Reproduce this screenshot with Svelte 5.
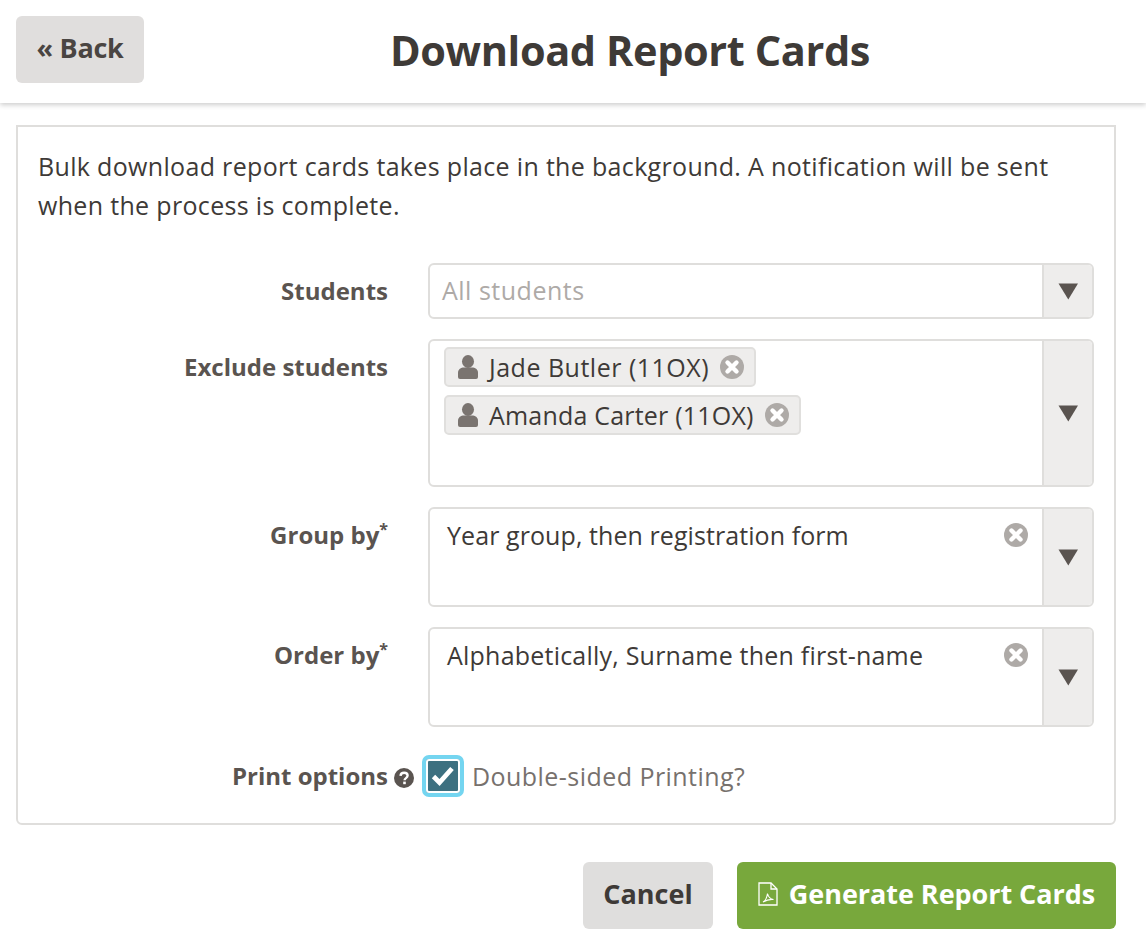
<script>
  const pdfPath = 'M1 1h12l6 6v16H1z';
</script>

{#snippet arrow()}
  <span class="arrow">
    <svg width="20" height="17" viewBox="0 0 20 17"><path d="M0.5 0.5h19.5L10.3 16.500z" fill="#5a5450" /></svg>
  </span>
{/snippet}

{#snippet clear()}
  <svg class="clear" width="24" height="24" viewBox="0 0 24 24">
    <circle cx="12" cy="12" r="12" fill="#aeaaa7" />
    <path d="M7.500 7.500l9 9M16.500 7.500l-9 9" stroke="#fff" stroke-width="4.400" stroke-linecap="round" />
  </svg>
{/snippet}

{#snippet person()}
  <svg class="person" width="20" height="24" viewBox="0 0 20 24">
    <ellipse cx="10" cy="6.500" rx="6" ry="6.500" fill="#7a7470" />
    <path d="M0 18c0-4 3-5.500 6-5.500h8c3 0 6 1.500 6 5.500v4a2 2 0 0 1-2 2H2a2 2 0 0 1-2-2z" fill="#7a7470" />
  </svg>
{/snippet}

<header class="topbar">
  <button class="btn back">« Back</button>
  <h1>Download Report Cards</h1>
</header>

<main class="content">
  <section class="panel">
    <p class="intro">Bulk download report cards takes place in the background. A notification will be sent when the process is complete.</p>

    <div class="form">
      <div class="label">Students</div>
      <div class="select students">
        <div class="value placeholder">All students</div>
        {@render arrow()}
      </div>

      <div class="label">Exclude students</div>
      <div class="select exclude">
        <div class="value chips">
          <span class="chip">{@render person()}<span class="name">Jade Butler (11OX)</span>{@render clear()}</span>
          <span class="chip long">{@render person()}<span class="name">Amanda Carter (11OX)</span>{@render clear()}</span>
        </div>
        {@render arrow()}
      </div>

      <div class="label">Group by<sup>*</sup></div>
      <div class="select tall">
        <div class="value single"><span>Year group, then registration form</span>{@render clear()}</div>
        {@render arrow()}
      </div>

      <div class="label">Order by<sup>*</sup></div>
      <div class="select tall">
        <div class="value single order"><span>Alphabetically, Surname then first-name</span>{@render clear()}</div>
        {@render arrow()}
      </div>

      <div class="label print-label">
        Print options
        <svg class="help" width="20" height="20" viewBox="0 0 20 20">
          <circle cx="10" cy="10" r="10" fill="#5a5450" />
          <path d="M6.500 7.800c.2-2 1.700-3 3.600-3 2 0 3.500 1.100 3.500 2.800 0 2.600-3 2.400-3 4.600" fill="none" stroke="#fff" stroke-width="2.400" />
          <rect x="9.200" y="13.600" width="2.600" height="2.600" fill="#fff" />
        </svg>
      </div>
      <label class="check-row">
        <span class="check">
          <svg width="26" height="24" viewBox="0 0 26 24"><path d="M3.500 12.500l6 6L22 4.500" fill="none" stroke="#fff" stroke-width="4.800" /></svg>
        </span>
        <span class="check-text">Double-sided Printing?</span>
      </label>
    </div>
  </section>

  <footer class="actions">
    <button class="btn cancel">Cancel</button>
    <button class="btn generate">
      <svg width="20" height="24" viewBox="0 0 20 24" fill="none" stroke="#fff" stroke-width="1.300">
        <path d={pdfPath} />
        <path d="M13 1v6h6" />
        <path d="M5 20c2-1 4-5 4.500-8.500.8 3.500 3 5.500 6 6-3-.3-7 .5-10.500 2.500z" stroke-width="1.100" />
      </svg>
      Generate Report Cards
    </button>
  </footer>
</main>

<style>
  :global(body) {
    margin: 0;
    background: #fff;
    font-family: "Open Sans", "Noto Sans", sans-serif;
    color: #3e3a37;
  }

  .topbar {
    height: 103px;
    box-sizing: border-box;
    padding: 16px;
    display: flex;
    align-items: flex-start;
    box-shadow: 0 2px 5px rgba(0, 0, 0, 0.2);
  }

  h1 {
    margin: 11px 0 0 246px;
    font-size: 41.500px;
    font-weight: 700;
    color: #3e3a37;
    letter-spacing: -0.4px;
    line-height: 46px;
    white-space: nowrap;
  }

  .btn {
    border: none;
    border-radius: 6px;
    height: 67px;
    font-family: inherit;
    font-weight: 700;
    font-size: 27px;
    padding: 0 0 4px;
  }

  .back {
    width: 128px;
    flex: none;
    background: #e0dedd;
    color: #4a4542;
    letter-spacing: -0.3px;
  }

  .content {
    padding: 22px 30px 0 16px;
  }

  .panel {
    border: 2px solid #dfdedc;
    border-radius: 0 0 6px 6px;
    padding: 20px 20px 17px;
    height: 700px;
    box-sizing: border-box;
  }

  .intro {
    margin: 0 0 39px;
    font-size: 25px;
    line-height: 38.500px;
    letter-spacing: 0.33px;
    color: #3e3a37;
  }

  .form {
    display: grid;
    grid-template-columns: 350px 666px;
    column-gap: 40px;
    row-gap: 20px;
  }

  .label {
    text-align: right;
    font-weight: 700;
    font-size: 24px;
    line-height: 34px;
    padding-top: 11px;
    color: #5a5450;
    white-space: nowrap;
  }

  .label sup {
    font-size: 16px;
    line-height: 0;
    font-weight: 700;
  }

  .select {
    display: flex;
    box-sizing: border-box;
    border: 2px solid #dfdedc;
    border-radius: 6px;
    overflow: hidden;
    font-size: 25px;
    line-height: 34px;
    letter-spacing: 0.35px;
  }

  .students { height: 56px; }
  .exclude { height: 148px; }
  .tall { height: 100px; }

  .value { flex: 1; min-width: 0; box-sizing: border-box; }

  .placeholder {
    padding: 8px 12px;
    color: #aeaaa7;
    letter-spacing: 0.5px;
  }

  .chips {
    padding: 6px 14px;
    display: flex;
    flex-direction: column;
    align-items: flex-start;
    gap: 8px;
  }

  .chip {
    height: 40px;
    box-sizing: border-box;
    border: 2px solid #e0dfdd;
    border-radius: 5px;
    background: #eeedec;
    display: inline-flex;
    align-items: center;
    padding: 0 10px 0 12px;
    letter-spacing: 0.5px;
  }

  .chip.long { letter-spacing: 0.2px; }
  .name { margin: 0 11px; }
  .person { flex: none; }

  .single {
    padding: 9px 14px 8px 17px;
    display: flex;
    justify-content: space-between;
    align-items: flex-start;
    letter-spacing: 0.08px;
  }

  .single.order { letter-spacing: 0.22px; }
  .single .clear { margin-top: 5px; }

  .arrow {
    width: 50px;
    box-sizing: border-box;
    flex: none;
    background: #eeedec;
    border-left: 2px solid #dfdedc;
    display: flex;
    align-items: center;
    justify-content: center;
  }

  .print-label {
    padding-top: 0;
    margin: 7px -26px 0 0;
    display: flex;
    justify-content: flex-end;
    align-items: center;
    gap: 6px;
    height: 44px;
  }

  .help { margin-top: 3px; }

  .check-row {
    display: flex;
    align-items: center;
    margin: 7px 0 0 -6px;
    height: 44px;
  }

  .check {
    width: 42px;
    height: 42px;
    box-sizing: border-box;
    border: 4px solid #74d5f0;
    border-radius: 7px;
    background: #3d7080;
    outline: 2px solid #fff;
    outline-offset: -6px;
    display: flex;
    align-items: center;
    justify-content: center;
  }

  .check-text {
    margin-left: 8px;
    font-size: 25px;
    letter-spacing: 0.45px;
    color: #77716d;
  }

  .actions {
    display: flex;
    justify-content: flex-end;
    gap: 24px;
    margin-top: 37px;
  }

  .cancel {
    width: 130px;
    background: #dfdedd;
    color: #3e3a37;
  }

  .generate {
    width: 379px;
    background: #78a83c;
    color: #fff;
    display: flex;
    align-items: center;
    justify-content: center;
    gap: 11px;
    letter-spacing: -0.05px;
  }
</style>
